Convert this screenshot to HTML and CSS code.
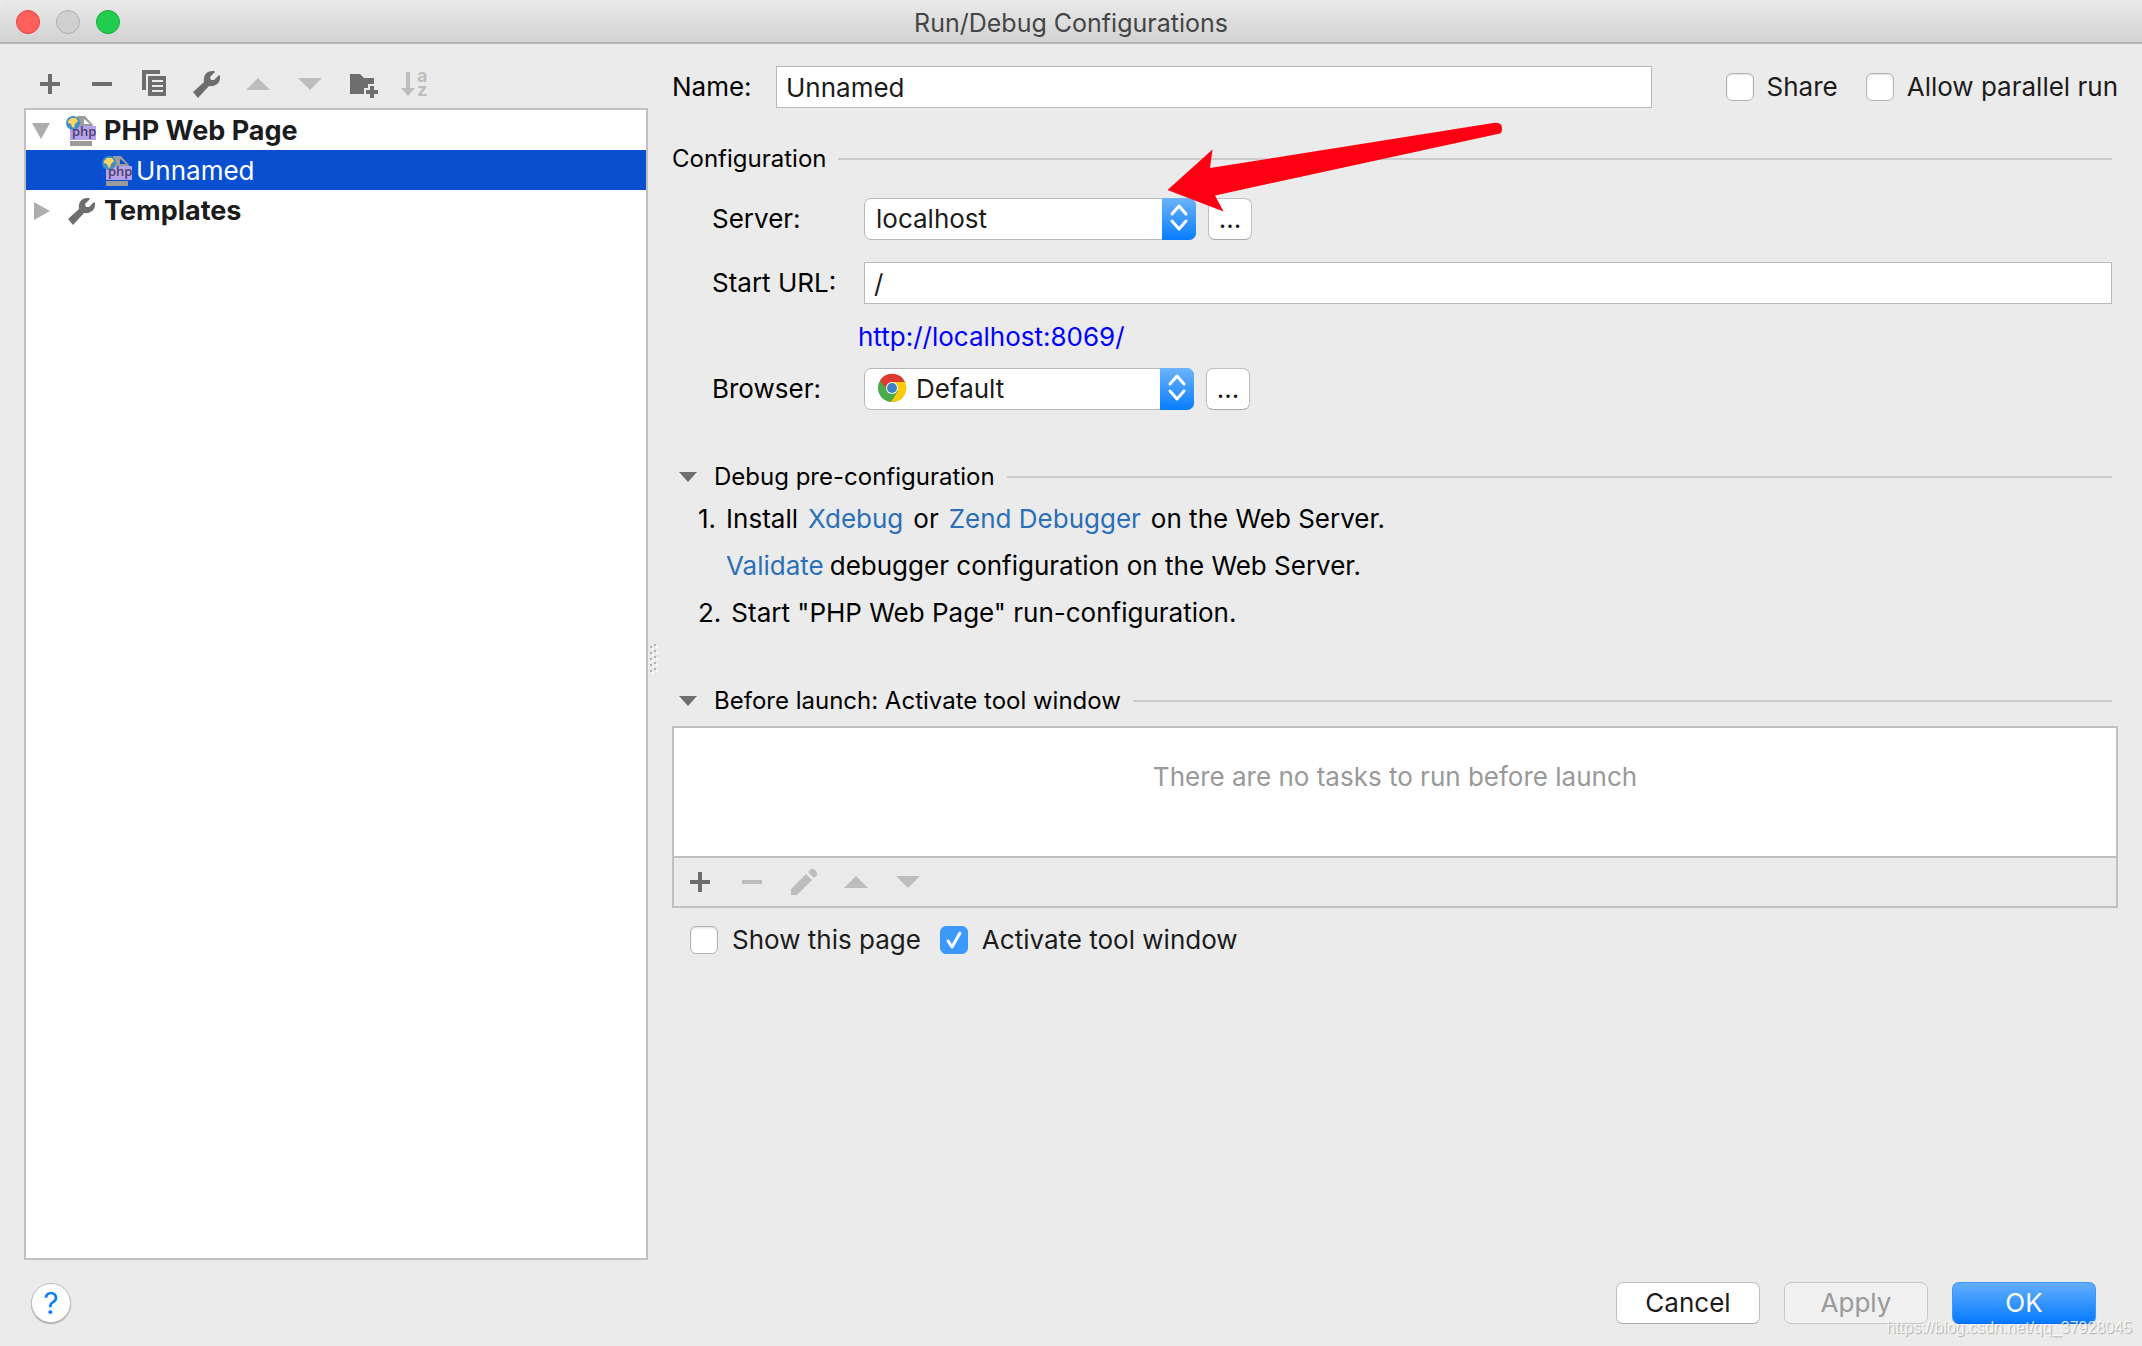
FILE: index.html
```html
<!DOCTYPE html>
<html lang="en">
<head>
<meta charset="utf-8">
<title>Run/Debug Configurations</title>
<link rel="stylesheet" href="styles.css">
</head>
<body>
<svg class="sprite" aria-hidden="true">
  <symbol id="i-plus" viewBox="0 0 32 32"><path d="M14 6h4v8h8v4h-8v8h-4v-8H6v-4h8z"/></symbol>
  <symbol id="i-minus" viewBox="0 0 32 32"><path d="M6 14h20v4H6z"/></symbol>
  <symbol id="i-copy" viewBox="0 0 32 32"><path d="M4 2h18v4H8v16H4z"/><path fill-rule="evenodd" d="M10 8h18v20H10zM14 12v2h11v-2zM14 17v2h11v-2zM14 22v2h11v-2z"/></symbol>
  <symbol id="i-wrench" viewBox="0 0 32 32"><path d="M3 24 L14 14 C13 8 16 2 24 3 L25 4 L20 9 L21 12 L24 12 L29 7 L30 8 C31 15 25 19 19 18 L8 30 Z"/></symbol>
  <symbol id="i-up" viewBox="0 0 32 32"><path d="M4 22 16 10 28 22z"/></symbol>
  <symbol id="i-down" viewBox="0 0 32 32"><path d="M4 10h24L16 22z"/></symbol>
  <symbol id="i-folder" viewBox="0 0 32 32"><path d="M4 6h10l4 4h10v6h-6v4h-4v6H4z"/><path d="M24 18h4v4h4v4h-4v4h-4v-4h-4v-4h4z"/></symbol>
  <symbol id="i-pencil" viewBox="0 0 32 32"><path d="M3 29v-6L18 8l6 6L9 29z"/><path d="M20 6l3-3q2-1 4 1l1 1q2 2 1 4l-3 3z"/></symbol>
  <symbol id="i-php" viewBox="0 0 32 32">
    <path fill="#9b9b9b" fill-rule="evenodd" d="M12 1h8l8 9v2H14zM19 4v5h6z"/>
    <path fill="#9b9b9b" d="M5 26h22v5H5z"/>
    <path fill="#b5a3ee" d="M5 11h26v14H5z"/>
    <circle cx="8" cy="8" r="7" fill="#3f8fc9"/>
    <path fill="#fbd560" d="M3 6l3-3 5 0 2 3-3 3-1 4-2-1-1-3-3-1z"/>
  </symbol>
  <symbol id="i-updown" viewBox="0 0 34 42"><path d="M10 16l7-8 7 8M10 23l7 8 7-8" fill="none" stroke="#fff" stroke-width="3" stroke-linecap="round" stroke-linejoin="round"/></symbol>
</svg>

<header class="titlebar">
  <div class="lights"><span class="light close"></span><span class="light idle"></span><span class="light zoom"></span></div>
  <h1>Run/Debug Configurations</h1>
</header>

<main class="content">
  <aside class="sidebar">
    <div class="toolbar">
      <button class="tool" aria-label="Add"><svg><use href="#i-plus"/></svg></button>
      <button class="tool" aria-label="Remove"><svg><use href="#i-minus"/></svg></button>
      <button class="tool" aria-label="Copy"><svg><use href="#i-copy"/></svg></button>
      <button class="tool" aria-label="Edit templates"><svg><use href="#i-wrench"/></svg></button>
      <button class="tool" aria-label="Move up" disabled><svg><use href="#i-up"/></svg></button>
      <button class="tool" aria-label="Move down" disabled><svg><use href="#i-down"/></svg></button>
      <button class="tool" aria-label="New folder"><svg><use href="#i-folder"/></svg></button>
      <button class="tool" aria-label="Sort" disabled><svg viewBox="0 0 32 32"><path d="M8 4h4v16h5l-7 8-7-8h5z"/><text class="sort-text"><tspan x="19" y="14">a</tspan><tspan x="19" y="28">z</tspan></text></svg></button>
    </div>
    <ul class="tree">
      <li class="row group"><svg class="twisty"><path d="M0 2h18L9 18z"/></svg><svg class="node" viewBox="0 0 32 32"><use href="#i-php"/><text x="7" y="21" class="php-text">php</text></svg>PHP Web Page</li>
      <li class="row child selected"><svg class="node" viewBox="0 0 32 32"><use href="#i-php"/><text x="7" y="21" class="php-text">php</text></svg>Unnamed</li>
      <li class="row group"><svg class="twisty"><path d="M2 1v18l16-9z"/></svg><svg class="node"><use href="#i-wrench"/></svg>Templates</li>
    </ul>
  </aside>

  <div class="splitter"><span class="grip"></span></div>

  <form class="editor">
    <div class="name-row">
      <label for="name">Name:</label>
      <input id="name" class="field" type="text" value="Unnamed">
      <div class="options">
        <label class="check"><input type="checkbox">Share</label>
        <label class="check"><input type="checkbox">Allow parallel run</label>
      </div>
    </div>

    <h2 class="section first">Configuration</h2>
    <div class="grid">
      <label for="server">Server:</label>
      <div class="controls">
        <span class="combo"><select id="server"><option>localhost</option></select><svg class="knob"><use href="#i-updown"/></svg></span>
        <button type="button" class="btn more">...</button>
        <svg class="pointer" viewBox="27 22 336 91"><path fill="#ff0012" d="M27.500 90 72.500 49.500 70 68 350 23.500Q362 21 362 28Q362 33 360 33.500L75 95.500 83.500 111.500z"/></svg>
      </div>
      <label for="url">Start URL:</label>
      <input id="url" class="field" type="text" value="/">
      <a class="url" href="http://localhost:8069/">http://localhost:8069/</a>
      <label for="browser">Browser:</label>
      <div class="controls">
        <span class="combo with-icon">
          <select id="browser"><option>Default</option></select>
          <svg class="chrome" viewBox="0 0 30 30"><circle cx="15" cy="15" r="14" fill="#4aab4c"/><path fill="#fbcb0b" d="M15 15l6 3-7 11A14 14 0 0 0 28 9H15z"/><path fill="#df3a2f" d="M3 8A14 14 0 0 1 28 9H15a6 6 0 0 0-6 6z"/><circle cx="15" cy="15" r="6" fill="#fff"/><circle cx="15" cy="15" r="5" fill="#3f7fc4"/></svg>
          <svg class="knob"><use href="#i-updown"/></svg>
        </span>
        <button type="button" class="btn more">...</button>
      </div>
    </div>

    <h2 class="section debug"><svg class="fold"><path d="M0 0h18L9 10z"/></svg>Debug pre-configuration</h2>
    <div class="steps">
      <p><span>1.</span> <span>Install</span> <a href="#xdebug">Xdebug</a> <span>or</span> <a href="#zend">Zend Debugger</a> <span>on the Web Server.</span></p>
      <p class="sub"><a href="#validate">Validate</a> <span>debugger configuration on the Web Server.</span></p>
      <p><span>2.</span> <span>Start "PHP Web Page" run-configuration.</span></p>
    </div>

    <h2 class="section launch"><svg class="fold"><path d="M0 0h18L9 10z"/></svg>Before launch: Activate tool window</h2>
    <div class="tasks">
      <p class="empty">There are no tasks to run before launch</p>
      <div class="task-tools">
        <button type="button" class="tool" aria-label="Add task"><svg><use href="#i-plus"/></svg></button>
        <button type="button" class="tool" aria-label="Remove task" disabled><svg><use href="#i-minus"/></svg></button>
        <button type="button" class="tool" aria-label="Edit task" disabled><svg><use href="#i-pencil"/></svg></button>
        <button type="button" class="tool" aria-label="Move task up" disabled><svg><use href="#i-up"/></svg></button>
        <button type="button" class="tool" aria-label="Move task down" disabled><svg><use href="#i-down"/></svg></button>
      </div>
    </div>
    <div class="launch-options">
      <label class="check"><input type="checkbox">Show this page</label>
      <label class="check"><input type="checkbox" checked>Activate tool window</label>
    </div>
  </form>
</main>

<footer class="footer">
  <button class="help" aria-label="Help">?</button>
  <div class="actions">
    <button class="btn">Cancel</button>
    <button class="btn" disabled>Apply</button>
    <button class="btn primary">OK</button>
  </div>
  <span class="watermark">https://blog.csdn.net/qq_37928045</span>
</footer>
</body>
</html>
```
FILE: styles.css
```css
* { box-sizing: border-box; }
body {
  margin: 0;
  min-height: 100vh;
  display: flex;
  flex-direction: column;
  background: #ebebeb;
  color: #000;
  font: 26px/32px Inter, "Liberation Sans", sans-serif;
}
h1, h2, p, ul { margin: 0; padding: 0; font-weight: 400; }
button, input, select { font: inherit; color: #1c1c1c; margin: 0; }
a { text-decoration: none; }
.sprite { position: absolute; width: 0; height: 0; }

.titlebar {
  position: relative;
  flex: none;
  height: 44px;
  display: flex;
  align-items: center;
  justify-content: center;
  padding: 3px 16px 0;
  background: linear-gradient(#eaeaea, #d2d2d2);
  border-bottom: 2px solid #b4b4b4;
  border-radius: 10px 0 0 0;
}
h1 { font-size: 25px; color: #454545; }
.lights { position: absolute; left: 16px; top: 10px; display: flex; gap: 16px; }
.light { width: 24px; height: 24px; border-radius: 50%; border: 1px solid; }
.close { background: #ff5f5a; border-color: #e2443f; }
.idle { background: #d0d0d0; border-color: #b0b0b0; }
.zoom { background: #22cd4e; border-color: #12ac34; }

.content { flex: 1; display: flex; padding: 14px 24px 0; }
.sidebar { flex: 0 0 624px; display: flex; flex-direction: column; }
.toolbar { display: flex; height: 50px; padding-top: 10px; }
.tool { width: 52px; height: 32px; padding: 0 10px; border: 0; background: none; }
.tool svg { display: block; width: 32px; height: 32px; fill: #6e6e6e; overflow: visible; }
.tool:disabled svg { fill: #bdbdbd; }
.sort-text { font: 700 18px Inter, sans-serif; }
.php-text { font: 600 13px "Open Sans", sans-serif; fill: #4c3f66; }

.tree { flex: 1; list-style: none; background: #fff; border: 2px solid #c0c0c0; }
.row { display: flex; align-items: center; height: 40px; padding-top: 2px; color: #1c1c1c; }
.group { font-size: 27px; font-weight: 700; padding-left: 6px; }
.child { padding-left: 75px; }
.selected { background: #0850d0; color: #fff; }
.twisty { width: 20px; height: 20px; fill: #adadad; margin-right: 13px; }
.node { width: 32px; height: 32px; fill: #6e6e6e; margin-right: 7px; }
.child .node { margin-right: 3px; }

.splitter { flex: 0 0 24px; display: flex; align-items: center; }
.grip {
  width: 8px;
  height: 30px;
  margin-left: 2px;
  background:
    linear-gradient(#b0b0b0 2px, transparent 2px) 0 2px / 2px 6px,
    linear-gradient(#b0b0b0 2px, transparent 2px) 4px 0 / 2px 6px,
    linear-gradient(#f8f8f8 2px, transparent 2px) 2px 4px / 2px 6px,
    linear-gradient(#f8f8f8 2px, transparent 2px) 6px 2px / 2px 6px;
  background-repeat: repeat-y;
}

.editor { flex: 1; min-width: 0; padding-top: 8px; }
.field {
  height: 42px;
  padding: 0 9px;
  background: #fff;
  border: 1px solid #b8b8b8;
  border-radius: 0;
}
.name-row { display: flex; align-items: center; }
.name-row > label { width: 104px; }
.name-row .field { flex: 1; min-width: 0; }
.options { display: flex; gap: 28px; margin-left: 74px; }
.check { display: flex; align-items: center; gap: 14px; color: #1c1c1c; white-space: nowrap; }
.options .check { gap: 13px; }
.check input {
  appearance: none;
  width: 28px;
  height: 28px;
  background: #fff;
  border: 1px solid #b4b4b4;
  border-radius: 6px;
  box-shadow: inset 0 1px 2px #ddd;
}
.check input:checked {
  border-color: #3b99fc;
  box-shadow: none;
  background: #3b99fc url("data:image/svg+xml,%3Csvg xmlns='http://www.w3.org/2000/svg' viewBox='0 0 26 26'%3E%3Cpath d='M7 14l4 6 8-14' fill='none' stroke='white' stroke-width='3' stroke-linecap='round' stroke-linejoin='round'/%3E%3C/svg%3E");
}

.section { display: flex; align-items: center; height: 32px; padding-right: 6px; font-size: 24px; white-space: nowrap; }
.section::after { content: ""; flex: 1; height: 2px; margin-left: 12px; background: #cbcbcb; }
.section.first { margin-top: 35px; }
.fold { width: 18px; height: 10px; margin: 0 17px 0 7px; fill: #6e6e6e; }

.grid {
  display: grid;
  grid-template-columns: 152px 1fr;
  align-items: center;
  padding: 23px 6px 0 40px;
}
.controls { position: relative; display: flex; gap: 12px; }
.combo { position: relative; width: 332px; }
.combo.with-icon { width: 330px; }
.combo select {
  appearance: none;
  display: block;
  width: 100%;
  height: 42px;
  padding: 0 44px 0 11px;
  background: #fff;
  border: 1px solid #b8b8b8;
  border-radius: 7px;
}
.combo.with-icon select { padding-left: 51px; }
.knob {
  position: absolute;
  right: 0;
  top: 0;
  width: 34px;
  height: 42px;
  border-radius: 0 7px 7px 0;
  background: linear-gradient(#6cb3fa, #087dff);
  pointer-events: none;
}
.chrome { position: absolute; left: 13px; top: 5px; width: 30px; height: 30px; }
.pointer { position: absolute; left: 303px; top: -76px; width: 336px; height: 91px; pointer-events: none; }
.grid > .field { margin: 22px 0; min-width: 0; }
.url { grid-column: 2; margin: -5px 0 15px -6px; color: #00f; }

.btn {
  width: 144px;
  height: 42px;
  padding: 0;
  background: #fff;
  border: 1px solid #c0c0c0;
  border-bottom-color: #a8a8a8;
  border-radius: 7px;
}
.btn:disabled { background: #f0f0f0; color: #9a9a9a; border-color: #c8c8c8; }
.btn.primary { background: linear-gradient(#64aefb, #067aff); color: #fff; border-color: #3d96f8; border-bottom-color: #0a6cf0; }
.btn.more { width: 44px; }

.section.debug { margin-top: 51px; }
.steps { display: flex; flex-direction: column; gap: 15px; padding: 10px 0 0 26px; }
.steps p { display: flex; gap: 10px; white-space: nowrap; }
.steps .sub { padding-left: 28px; gap: 6px; }
.steps a { color: #2a6fb8; }

.section.launch { margin-top: 56px; }
.tasks { margin-top: 9px; border: 2px solid #c0c0c0; }
.empty { height: 128px; padding-top: 33px; background: #fff; color: #999; text-align: center; }
.task-tools { display: flex; height: 50px; border-top: 2px solid #c0c0c0; padding-top: 8px; }
.launch-options { display: flex; gap: 19px; padding: 16px 0 0 18px; }

.footer { position: relative; display: flex; justify-content: space-between; padding: 22px 46px 22px 31px; }
.help {
  width: 40px;
  height: 40px;
  margin-top: 1px;
  padding: 0;
  border: 1px solid #c0c0c0;
  border-radius: 50%;
  background: #fff;
  box-shadow: 0 1px 1px #aaa;
  color: #087dff;
  font-size: 30px;
}
.actions { display: flex; gap: 24px; }
.watermark {
  position: absolute;
  right: 10px;
  bottom: 4px;
  font: 16px/28px "Liberation Sans", Arial, sans-serif;
  color: #fffc;
  text-shadow: 1px 1px 1px #0004;
}
```
